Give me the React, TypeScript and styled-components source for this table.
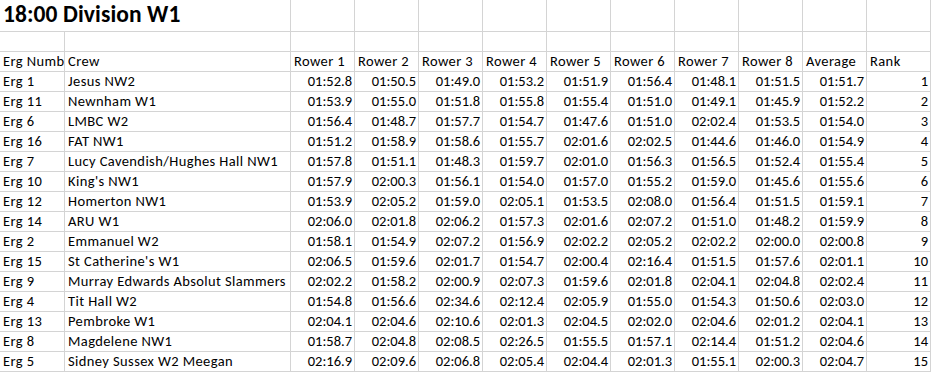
import React from "react";
import styled, { createGlobalStyle } from "styled-components";

const GlobalStyle = createGlobalStyle`
  html, body { margin: 0; padding: 0; background: #ffffff; }
  body { font-family: Carlito, Lato, "Liberation Sans", sans-serif; color: #000; }
`;

const LINE = "#d4d4d4";

const Sheet = styled.div`
  display: grid;
  grid-template-columns: 65px 226px repeat(10, 64px);
  grid-template-rows: 32px;
  grid-auto-rows: 20px;
  width: 931px;
  font-family: Carlito, Lato, "Liberation Sans", sans-serif;
  font-size: 14.5px;
  color: #000;
`;

const Cell = styled.div<{ $align?: "left" | "right" }>`
  box-sizing: border-box;
  border-right: 1px solid ${LINE};
  border-bottom: 1px solid ${LINE};
  display: flex;
  align-items: flex-end;
  justify-content: ${(p) => (p.$align === "right" ? "flex-end" : "flex-start")};
  padding: 0 2px 2px 3px;
  line-height: 16px;
  letter-spacing: ${(p) => (p.$align === "right" ? "0" : "0.4px")};
  white-space: nowrap;
  overflow: hidden;
`;

const TitleCell = styled(Cell)`
  grid-column: span 2;
  font-size: 23.5px;
  font-weight: 700;
  line-height: 26px;
  letter-spacing: 0.1px;
  padding: 0 0 4px 3px;
`;

type Row = [string, string, string[], string, number];

const rows: Row[] = [
  ["Erg 1", "Jesus NW2", ["01:52.8", "01:50.5", "01:49.0", "01:53.2", "01:51.9", "01:56.4", "01:48.1", "01:51.5"], "01:51.7", 1],
  ["Erg 11", "Newnham W1", ["01:53.9", "01:55.0", "01:51.8", "01:55.8", "01:55.4", "01:51.0", "01:49.1", "01:45.9"], "01:52.2", 2],
  ["Erg 6", "LMBC W2", ["01:56.4", "01:48.7", "01:57.7", "01:54.7", "01:47.6", "01:51.0", "02:02.4", "01:53.5"], "01:54.0", 3],
  ["Erg 16", "FAT NW1", ["01:51.2", "01:58.9", "01:58.6", "01:55.7", "02:01.6", "02:02.5", "01:44.6", "01:46.0"], "01:54.9", 4],
  ["Erg 7", "Lucy Cavendish/Hughes Hall NW1", ["01:57.8", "01:51.1", "01:48.3", "01:59.7", "02:01.0", "01:56.3", "01:56.5", "01:52.4"], "01:55.4", 5],
  ["Erg 10", "King's NW1", ["01:57.9", "02:00.3", "01:56.1", "01:54.0", "01:57.0", "01:55.2", "01:59.0", "01:45.6"], "01:55.6", 6],
  ["Erg 12", "Homerton NW1", ["01:53.9", "02:05.2", "01:59.0", "02:05.1", "01:53.5", "02:08.0", "01:56.4", "01:51.5"], "01:59.1", 7],
  ["Erg 14", "ARU W1", ["02:06.0", "02:01.8", "02:06.2", "01:57.3", "02:01.6", "02:07.2", "01:51.0", "01:48.2"], "01:59.9", 8],
  ["Erg 2", "Emmanuel W2", ["01:58.1", "01:54.9", "02:07.2", "01:56.9", "02:02.2", "02:05.2", "02:02.2", "02:00.0"], "02:00.8", 9],
  ["Erg 15", "St Catherine's W1", ["02:06.5", "01:59.6", "02:01.7", "01:54.7", "02:00.4", "02:16.4", "01:51.5", "01:57.6"], "02:01.1", 10],
  ["Erg 9", "Murray Edwards Absolut Slammers", ["02:02.2", "01:58.2", "02:00.9", "02:07.3", "01:59.6", "02:01.8", "02:04.1", "02:04.8"], "02:02.4", 11],
  ["Erg 4", "Tit Hall W2", ["01:54.8", "01:56.6", "02:34.6", "02:12.4", "02:05.9", "01:55.0", "01:54.3", "01:50.6"], "02:03.0", 12],
  ["Erg 13", "Pembroke W1", ["02:04.1", "02:04.6", "02:10.6", "02:01.3", "02:04.5", "02:02.0", "02:04.6", "02:01.2"], "02:04.1", 13],
  ["Erg 8", "Magdelene NW1", ["01:58.7", "02:04.8", "02:08.5", "02:26.5", "01:55.5", "01:57.1", "02:14.4", "01:51.2"], "02:04.6", 14],
  ["Erg 5", "Sidney Sussex W2 Meegan", ["02:16.9", "02:09.6", "02:06.8", "02:05.4", "02:04.4", "02:01.3", "01:55.1", "02:00.3"], "02:04.7", 15],
];

const headers = ["Erg Number", "Crew", "Rower 1", "Rower 2", "Rower 3", "Rower 4", "Rower 5", "Rower 6", "Rower 7", "Rower 8", "Average", "Rank"];

export default function App() {
  return (
    <>
      <GlobalStyle />
      <Sheet>
        <TitleCell>18:00 Division W1</TitleCell>
        {Array.from({ length: 10 }).map((_, i) => (
          <Cell key={`t${i}`} />
        ))}
        {Array.from({ length: 12 }).map((_, i) => (
          <Cell key={`e${i}`} />
        ))}
        {headers.map((h) => (
          <Cell key={h}>{h}</Cell>
        ))}
        {rows.map(([erg, crew, times, avg, rank]) => (
          <React.Fragment key={erg}>
            <Cell>{erg}</Cell>
            <Cell>{crew}</Cell>
            {times.map((t, i) => (
              <Cell key={i} $align="right">{t}</Cell>
            ))}
            <Cell $align="right">{avg}</Cell>
            <Cell $align="right">{rank}</Cell>
          </React.Fragment>
        ))}
      </Sheet>
    </>
  );
}
